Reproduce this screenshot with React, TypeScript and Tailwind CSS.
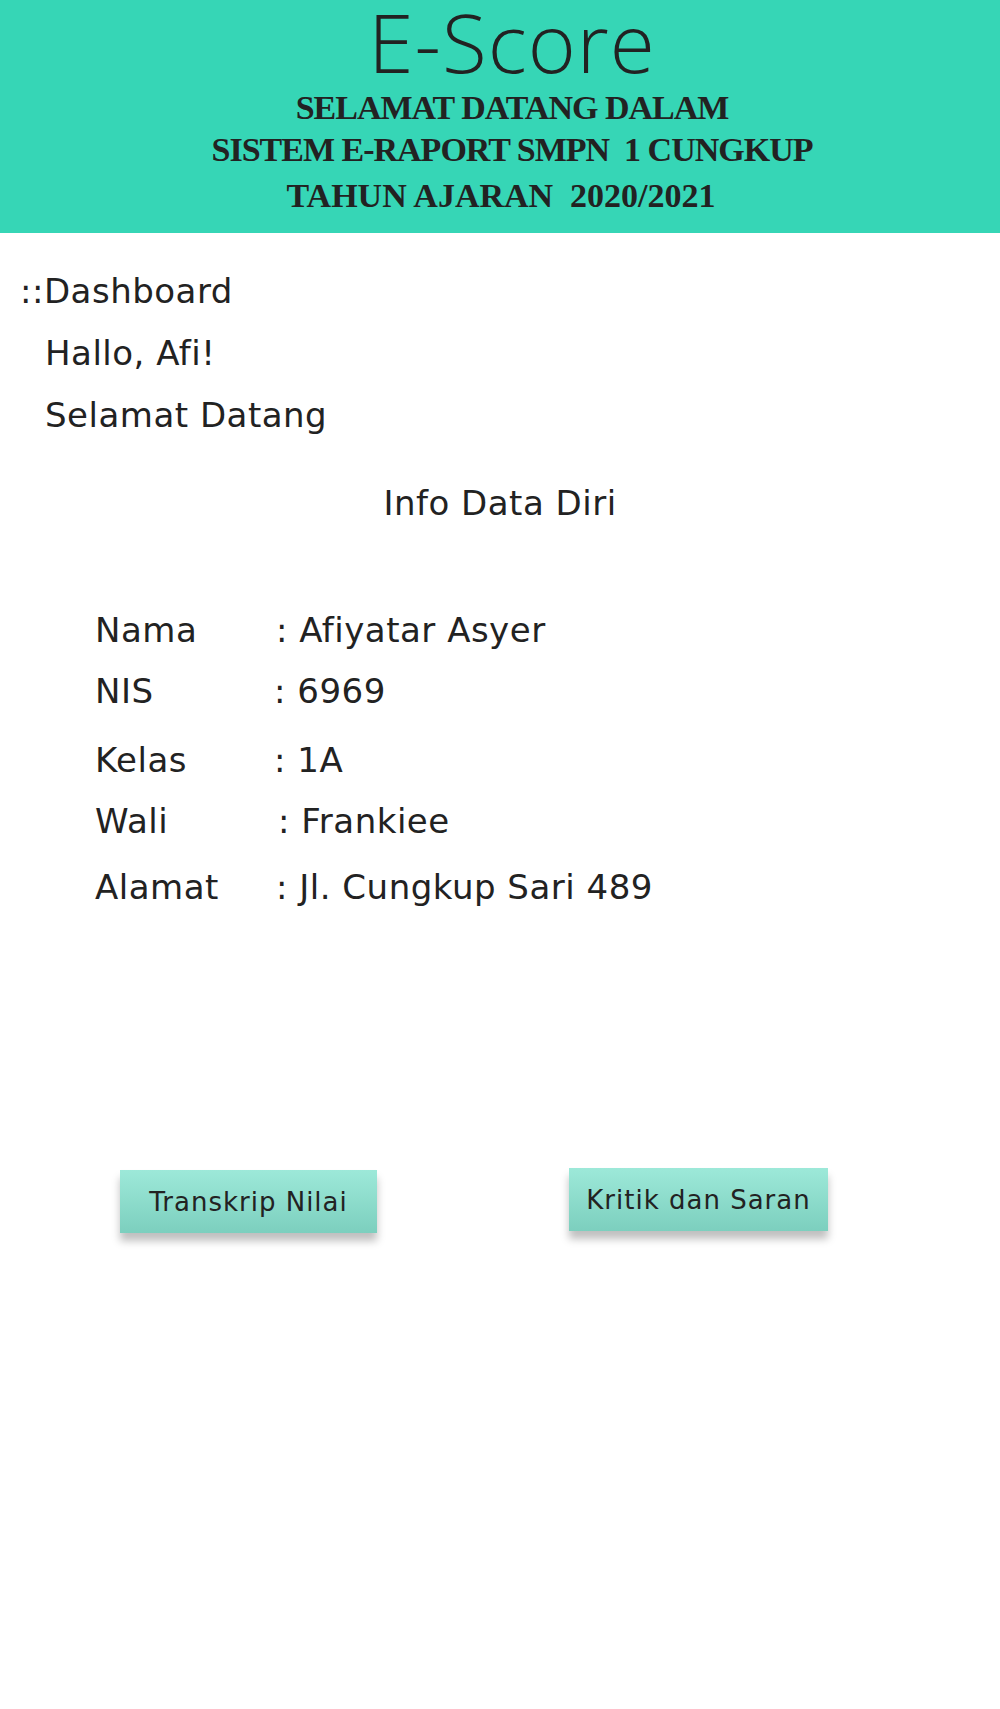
const rows = [
  { label: "Nama", value: ": Afiyatar Asyer", gap: "", shift: "" },
  { label: "NIS", value: ": 6969", gap: "mt-[21px]", shift: "-ml-[2px]" },
  { label: "Kelas", value: ": 1A", gap: "mt-[29px]", shift: "-ml-[2px]" },
  { label: "Wali", value: ": Frankiee", gap: "mt-[21px]", shift: "ml-[2px]" },
  { label: "Alamat", value: ": Jl. Cungkup Sari 489", gap: "mt-[26px]", shift: "" },
];

export default function App() {
  return (
    <div className="w-[1000px] min-h-[1709px] bg-white text-[#222] font-['DejaVu_Sans',sans-serif]">
      <header className="h-[233px] bg-[#36d6b6] flex flex-col items-center pl-6">
        <h1 className="font-['Open_Sans',sans-serif] text-[82px] leading-[82px] font-light tracking-[1px]">
          E-Score
        </h1>
        <div className="font-['Liberation_Serif',serif] font-bold text-[34px] leading-[40px] tracking-[-1px] flex flex-col items-center">
          <p className="mt-[6px]">SELAMAT DATANG DALAM</p>
          <p className="mt-[2px]">SISTEM E-RAPORT SMPN&nbsp; 1 CUNGKUP</p>
          <p className="mt-[6px] mr-[22px] tracking-[0px]">TAHUN AJARAN&nbsp; 2020/2021</p>
        </div>
      </header>

      <main className="text-[34px] leading-[40px] tracking-[0.5px]">
        <div className="pl-5 pt-[38px]">::Dashboard</div>
        <div className="pl-[45px] mt-[22px]">Hallo, Afi!</div>
        <div className="pl-[45px] mt-[22px]">Selamat Datang</div>
        <div className="text-center mt-[48px]">Info Data Diri</div>

        <div className="pl-[95px] mt-[87px] flex flex-col">
          {rows.map((r) => (
            <div key={r.label} className={`flex ${r.gap}`}>
              <span className="w-[181px]">{r.label}</span>
              <span className={r.shift}>{r.value}</span>
            </div>
          ))}
        </div>

        <div className="flex mt-[263px] text-[26px] tracking-[1px]">
          <button className="ml-[120px] w-[257px] h-[63px] bg-gradient-to-b from-[#9de9d9] to-[#7ccfbe] shadow-[0_8px_8px_rgba(0,0,0,0.25)]">
            Transkrip Nilai
          </button>
          <button className="ml-[192px] -mt-[2px] w-[259px] h-[63px] bg-gradient-to-b from-[#9de9d9] to-[#7ccfbe] shadow-[0_8px_8px_rgba(0,0,0,0.25)]">
            Kritik dan Saran
          </button>
        </div>
      </main>
    </div>
  );
}
